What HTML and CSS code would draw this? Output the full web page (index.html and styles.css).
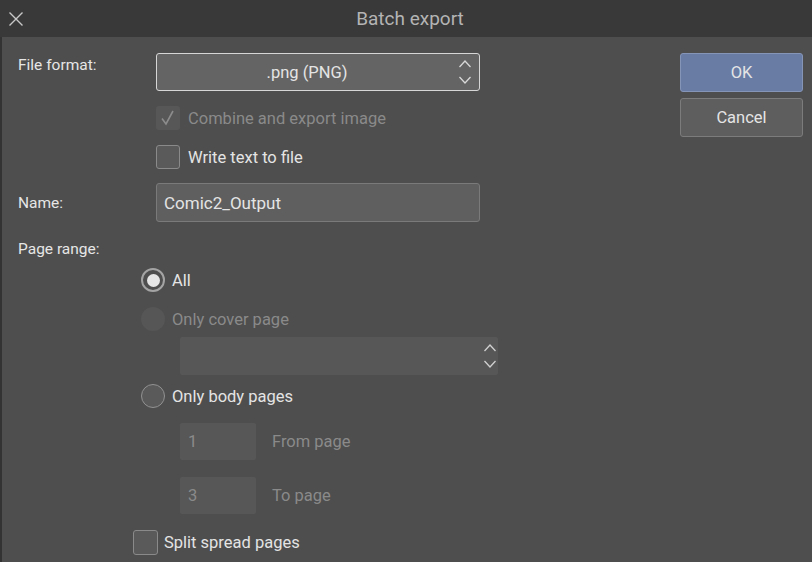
FILE: index.html
```html
<!DOCTYPE html>
<html>
<head>
<meta charset="utf-8">
<link rel="stylesheet" href="styles.css">
</head>
<body>
<div class="titlebar">
  <div class="close">
    <svg width="16" height="16" viewBox="0 0 16 16"><path d="M1.5 1.5 L14.5 14.5 M14.5 1.5 L1.5 14.5" stroke="#c8c8c8" stroke-width="1.4" fill="none"/></svg>
  </div>
  <div class="title">Batch export</div>
  <div></div>
</div>
<div class="dialog">
  <div class="form">
    <div class="row row-format">
      <div class="label label-top">File format:</div>
      <div class="select focus">
        <span>.png (PNG)</span>
        <svg class="chev" width="14" height="28" viewBox="0 0 14 28"><path d="M1.5 9 L7 3 L12.5 9 M1.5 19 L7 25 L12.5 19" stroke="#d8d8d8" stroke-width="1.3" fill="none"/></svg>
      </div>
    </div>
    <div class="row check-row indent">
      <div class="checkbox disabled">
        <svg width="24" height="24" viewBox="0 0 24 24"><path d="M6 12.5 L10 18 L17 5" stroke="#8c8c8c" stroke-width="1.6" fill="none"/></svg>
      </div>
      <span class="dim">Combine and export image</span>
    </div>
    <div class="row check-row indent r3">
      <div class="checkbox"></div>
      <span>Write text to file</span>
    </div>
    <div class="row row-name">
      <div class="label">Name:</div>
      <div class="input">Comic2_Output</div>
    </div>
    <div class="label section">Page range:</div>
    <div class="radios">
      <div class="radio-row">
        <div class="radio on"><div class="dot"></div></div>
        <span>All</span>
      </div>
      <div class="radio-row r-cover">
        <div class="radio disabled"></div>
        <span class="dim">Only cover page</span>
      </div>
      <div class="select disabled sub">
        <svg class="chev" width="14" height="28" viewBox="0 0 14 28"><path d="M1.5 9 L7 3 L12.5 9 M1.5 19 L7 25 L12.5 19" stroke="#d0d0d0" stroke-width="1.3" fill="none"/></svg>
      </div>
      <div class="radio-row r-body">
        <div class="radio"></div>
        <span>Only body pages</span>
      </div>
      <div class="num-row first">
        <div class="num">1</div>
        <span class="dim">From page</span>
      </div>
      <div class="num-row">
        <div class="num">3</div>
        <span class="dim">To page</span>
      </div>
    </div>
    <div class="row check-row split">
      <div class="checkbox"></div>
      <span>Split spread pages</span>
    </div>
  </div>
  <div class="buttons">
    <div class="btn ok">OK</div>
    <div class="btn cancel">Cancel</div>
  </div>
</div>
</body>
</html>
```
FILE: styles.css
```css
html, body {
  margin: 0;
  padding: 0;
}
body {
  width: 812px;
  height: 562px;
  overflow: hidden;
  background: #333333;
  font-family: Roboto, "Liberation Sans", sans-serif;
  color: #e4e4e4;
  font-size: 16.5px;
}
.titlebar {
  height: 37px;
  background: #393939;
  display: grid;
  grid-template-columns: 1fr auto 1fr;
  align-items: center;
}
.close {
  padding-left: 8px;
  display: flex;
  align-items: center;
  height: 37px;
}
.title {
  font-size: 19px;
  color: #b4b4b4;
  padding-left: 8px;
}
.dialog {
  margin-left: 2px;
  height: 525px;
  background: #4e4e4e;
  display: flex;
  box-sizing: border-box;
  padding-top: 16px;
}
.form {
  width: 678px;
  padding-left: 16px;
  box-sizing: border-box;
}
.row {
  display: flex;
}
.label {
  width: 138px;
  flex: none;
  font-size: 15.5px;
  line-height: 20px;
  color: #e6e6e6;
}
.label-top {
  padding-top: 2px;
}
.select {
  box-sizing: border-box;
  height: 38px;
  width: 324px;
  border-radius: 3px;
  background: #646464;
  border: 1px solid #7c7c7c;
  display: flex;
  align-items: center;
  justify-content: center;
  position: relative;
}
.select.focus {
  border: 1.5px solid #d6d6d6;
}
.select span {
  margin-left: -22px;
}
.chev {
  position: absolute;
  right: 7px;
  top: 4px;
}
.check-row {
  align-items: center;
  gap: 8px;
}
.indent {
  padding-left: 138px;
  margin-top: 15px;
}
.r3 {
  margin-top: 15px;
}
.checkbox {
  box-sizing: border-box;
  width: 24px;
  height: 24px;
  border: 1px solid #8a8a8a;
  border-radius: 3px;
  background: #5a5a5a;
  flex: none;
}
.checkbox.disabled {
  border: none;
  background: #575757;
}
.dim {
  color: #8a8a8a;
}
.row-name {
  margin-top: 14px;
  align-items: center;
}
.input {
  box-sizing: border-box;
  width: 324px;
  height: 39px;
  border: 1px solid #7a7a7a;
  border-radius: 3px;
  background: #5f5f5f;
  padding-left: 7px;
  display: flex;
  align-items: center;
  font-size: 17px;
}
.section {
  margin-top: 17px;
}
.radios {
  padding-left: 123px;
  margin-top: 9px;
}
.radio-row {
  display: flex;
  align-items: center;
  gap: 7px;
  height: 24px;
}
.radio {
  box-sizing: border-box;
  width: 24px;
  height: 24px;
  border-radius: 50%;
  border: 1.5px solid #929292;
  background: #5a5a5a;
  display: flex;
  align-items: center;
  justify-content: center;
  flex: none;
}
.radio.on {
  border: 2px solid #a4a4a4;
  background: #4e4e4e;
}
.dot {
  width: 13px;
  height: 13px;
  border-radius: 50%;
  background: #e6e6e6;
}
.radio.disabled {
  border: none;
  background: #565656;
}
.r-cover {
  margin-top: 15px;
}
.select.sub {
  margin-top: 6px;
  margin-left: 39px;
  width: 318px;
  border: none;
  background: #575757;
  border-radius: 2px;
}
.select.sub .chev {
  right: 1px;
  top: 5px;
}
.r-body {
  margin-top: 9px;
}
.num-row {
  display: flex;
  align-items: center;
  margin-left: 39px;
  margin-top: 17px;
  gap: 16px;
}
.num-row.first {
  margin-top: 15px;
}
.num {
  box-sizing: border-box;
  width: 76px;
  height: 37px;
  background: #575757;
  border-radius: 2px;
  color: #8a8a8a;
  padding-left: 8px;
  display: flex;
  align-items: center;
}
.split {
  margin-left: 115px;
  margin-top: 16px;
  gap: 6px;
}
.split .checkbox {
  width: 25px;
  height: 25px;
}
.buttons {
  display: flex;
  flex-direction: column;
  gap: 6px;
}
.btn {
  box-sizing: border-box;
  width: 123px;
  height: 39px;
  border-radius: 3px;
  display: flex;
  align-items: center;
  justify-content: center;
  font-size: 16.5px;
}
.ok {
  background: #687ca4;
  border: 1px solid #8595b8;
}
.cancel {
  background: #5e5e5e;
  border: 1px solid #7c7c7c;
}
```
